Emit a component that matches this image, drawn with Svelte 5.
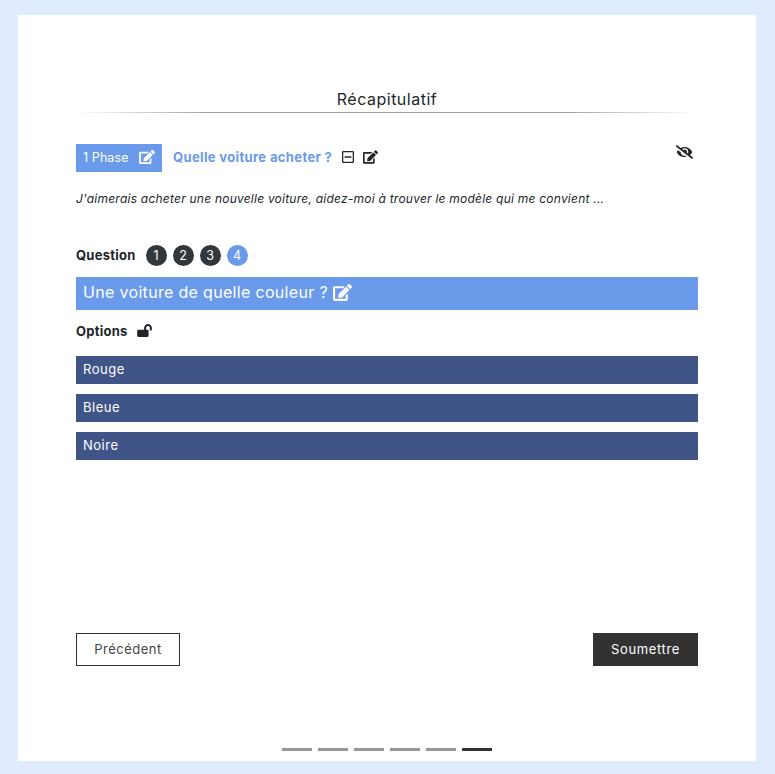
<script>
  const qs = [1, 2, 3, 4];
  const options = ['Rouge', 'Bleue', 'Noire'];
  const steps = [0, 1, 2, 3, 4, 5];
  const edit = 'M402.6 83.2l90.2 90.2c3.8 3.8 3.8 10 0 13.8L274.4 405.6l-92.8 10.3c-12.4 1.4-22.9-9.1-21.5-21.5l10.3-92.8L388.8 83.2c3.8-3.8 10-3.8 13.8 0zm162-22.9l-48.8-48.8c-15.2-15.2-39.9-15.2-55.2 0l-35.4 35.4c-3.8 3.8-3.8 10 0 13.8l90.2 90.2c3.8 3.8 10 3.8 13.8 0l35.4-35.4c15.2-15.3 15.2-40 0-55.2zM384 346.2V448H64V128h229.8c3.2 0 6.2-1.3 8.5-3.5l40-40c7.6-7.6 2.2-20.5-8.5-20.5H48C21.5 64 0 85.5 0 112v352c0 26.5 21.5 48 48 48h352c26.5 0 48-21.5 48-48V306.2c0-10.7-12.9-16-20.5-8.5l-40 40c-2.2 2.3-3.5 5.3-3.5 8.5z';
</script>

<div class="card">
  <h1 class="title">Récapitulatif</h1>
  <div class="rule"></div>

  <div class="phase-row">
    <span class="phase"><span class="phase-text">1 Phase</span>
      <svg class="i16" viewBox="0 0 576 512"><path d={edit} /></svg>
    </span>
    <span class="phase-name">Quelle voiture acheter ?</span>
    <svg class="minus" viewBox="0 0 448 512"><path d="M108 284c-6.6 0-12-5.4-12-12v-32c0-6.6 5.4-12 12-12h232c6.6 0 12 5.4 12 12v32c0 6.6-5.4 12-12 12H108zM448 80v352c0 26.5-21.5 48-48 48H48c-26.5 0-48-21.5-48-48V80c0-26.5 21.5-48 48-48h352c26.5 0 48 21.5 48 48zm-48 346V86c0-3.3-2.7-6-6-6H54c-3.3 0-6 2.7-6 6v340c0 3.3 2.7 6 6 6h340c3.3 0 6-2.7 6-6z" /></svg>
    <svg class="i15" viewBox="0 0 576 512"><path d={edit} /></svg>
    <svg class="eye" viewBox="0 0 640 512"><path d="M320 400c-75.85 0-137.25-58.71-142.9-133.11L72.2 185.82c-13.79 17.3-26.48 35.59-36.72 55.59a32.35 32.35 0 0 0 0 29.19C89.71 376.41 197.07 448 320 448c26.91 0 52.87-4 77.89-10.46L346 397.39a144.13 144.13 0 0 1-26 2.61zm313.82 58.1l-110.55-85.44a331.25 331.25 0 0 0 81.25-102.07 32.35 32.35 0 0 0 0-29.19C550.29 135.59 442.93 64 320 64a308.15 308.15 0 0 0-147.32 37.7L45.46 3.37A16 16 0 0 0 23 6.18L3.37 31.45A16 16 0 0 0 6.18 53.9l588.36 454.73a16 16 0 0 0 22.46-2.81l19.64-25.27a16 16 0 0 0-2.82-22.45zm-183.72-142l-39.3-30.38A94.75 94.75 0 0 0 416 256a94.76 94.76 0 0 0-121.31-92.21A47.65 47.65 0 0 1 304 192a46.64 46.64 0 0 1-1.54 10l-73.61-56.89A142.31 142.31 0 0 1 320 112a143.92 143.92 0 0 1 144 144c0 21.63-5.29 41.79-13.9 60.11z" /></svg>
  </div>

  <p class="desc">J'aimerais acheter une nouvelle voiture, aidez-moi à trouver le modèle qui me convient ...</p>

  <div class="q-row">
    <span class="label">Question</span>
    <div class="nums">
      {#each qs as q}
        <span class="num" class:active={q === 4}>{q}</span>
      {/each}
    </div>
  </div>

  <div class="q-bar"><span class="q-text">Une voiture de quelle couleur ?</span>
    <svg class="i19" viewBox="0 0 576 512"><path d={edit} /></svg>
  </div>

  <div class="opt-head">
    <span class="label">Options</span>
    <svg class="lock" viewBox="0 0 576 512"><path d="M423.5 0C339.5.3 272 69.5 272 153.5V224H48c-26.5 0-48 21.5-48 48v192c0 26.5 21.5 48 48 48h352c26.5 0 48-21.5 48-48V272c0-26.5-21.5-48-48-48h-48v-71.1c0-39.6 31.7-72.5 71.3-72.9 40-.4 72.7 32.1 72.7 72v80c0 13.3 10.7 24 24 24h32c13.3 0 24-10.7 24-24v-80C576 68 507.5-.3 423.5 0z" /></svg>
  </div>

  <div class="options">
    {#each options as o}
      <div class="option">{o}</div>
    {/each}
  </div>

  <div class="actions">
    <button class="prev">Précédent</button>
    <button class="next">Soumettre</button>
  </div>

  <div class="steps">
    {#each steps as s}
      <span class="step" class:current={s === 5}></span>
    {/each}
  </div>
</div>

<style>
  :global(body) {
    margin: 0;
    background: #e0ebff;
  }
  .card {
    box-sizing: border-box;
    width: 738px;
    height: 746px;
    margin: 15px 0 13px 18px;
    padding: 83px 58px 0;
    background: #fff;
    font-family: Inter, "Open Sans", sans-serif;
    color: #212529;
    display: flex;
    flex-direction: column;
  }
  svg { display: block; fill: currentColor; flex: none; }
  .title {
    margin: 0;
    height: 14px;
    line-height: 2px;
    font-size: 16px;
    font-weight: 400;
    letter-spacing: .5px;
    text-align: center;
    color: #212529;
  }
  .rule {
    height: 1px;
    background: linear-gradient(to right, rgba(0,0,0,0), rgba(0,0,0,.38) 22%, rgba(0,0,0,.38) 78%, rgba(0,0,0,0));
  }
  .phase-row {
    display: flex;
    align-items: center;
    margin-top: 31px;
    height: 28px;
    position: relative;
  }
  .phase {
    box-sizing: border-box;
    width: 86px;
    height: 28px;
    padding-left: 7px;
    background: #6a9aea;
    color: #fff;
    font-size: 12.5px;
    letter-spacing: .1px;
    display: flex;
    align-items: center;
    gap: 9px;
  }
  .phase-text { margin-top: -2px; }
  .i16 { width: 16px; height: 14px; margin-top: -2px; margin-left: 1px; }
  .phase-name {
    margin-left: 11px;
    margin-top: -2px;
    color: #6a9aea;
    font-size: 13px;
    font-weight: 700;
    letter-spacing: .36px;
  }
  .minus { width: 12px; height: 14px; margin-left: 10px; margin-top: -2px; }
  .i15 { width: 15px; height: 14px; margin-left: 9px; margin-top: -3px; }
  .eye { position: absolute; right: 5px; top: 1px; width: 17px; height: 14px; }
  .desc {
    margin: 19px 0 0;
    font-size: 12px;
    line-height: 16px;
    font-style: italic;
    letter-spacing: .23px;
  }
  .q-row {
    display: flex;
    align-items: center;
    margin-top: 38px;
    height: 21px;
  }
  .label {
    font-size: 13px;
    font-weight: 700;
    letter-spacing: .25px;
  }
  .q-row .label { margin-top: -2px; }
  .nums { display: flex; gap: 6px; margin-left: 10px; }
  .num {
    width: 21px;
    height: 21px;
    border-radius: 50%;
    background: #32373c;
    color: #fff;
    font-size: 12.5px;
    line-height: 21px;
    text-align: center;
  }
  .num.active { background: #6a9aea; }
  .q-bar {
    box-sizing: border-box;
    height: 33px;
    margin-top: 11px;
    padding-left: 7px;
    background: #6a9aea;
    color: #fff;
    font-size: 16px;
    letter-spacing: .32px;
    display: flex;
    align-items: center;
    gap: 5px;
  }
  .q-text { margin-top: -3px; }
  .i19 { width: 19px; height: 17px; margin-top: -3px; }
  .opt-head {
    display: flex;
    align-items: center;
    height: 20px;
    margin-top: 11px;
    gap: 9px;
  }
  .lock { width: 15px; height: 13px; margin-top: -1px; }
  .options {
    display: flex;
    flex-direction: column;
    gap: 10px;
    margin-top: 15px;
  }
  .option {
    box-sizing: border-box;
    height: 28px;
    padding-left: 7px;
    background: #3f5587;
    color: #fff;
    font-size: 13px;
    letter-spacing: .5px;
    line-height: 27px;
  }
  .actions {
    display: flex;
    justify-content: space-between;
    margin-top: 173px;
  }
  button {
    box-sizing: border-box;
    height: 33px;
    font-family: inherit;
    font-size: 13px;
    line-height: 29px;
    letter-spacing: .5px;
    border: 1px solid #323232;
    padding: 0 0 1px;
  }
  .prev { width: 104px; background: #fff; color: #444; }
  .next { width: 105px; background: #323232; color: #fff; letter-spacing: .65px; }
  .steps {
    display: flex;
    justify-content: center;
    gap: 6px;
    margin-top: 82px;
  }
  .step { width: 30px; height: 3px; background: #969696; }
  .step.current { background: #323232; }
</style>
